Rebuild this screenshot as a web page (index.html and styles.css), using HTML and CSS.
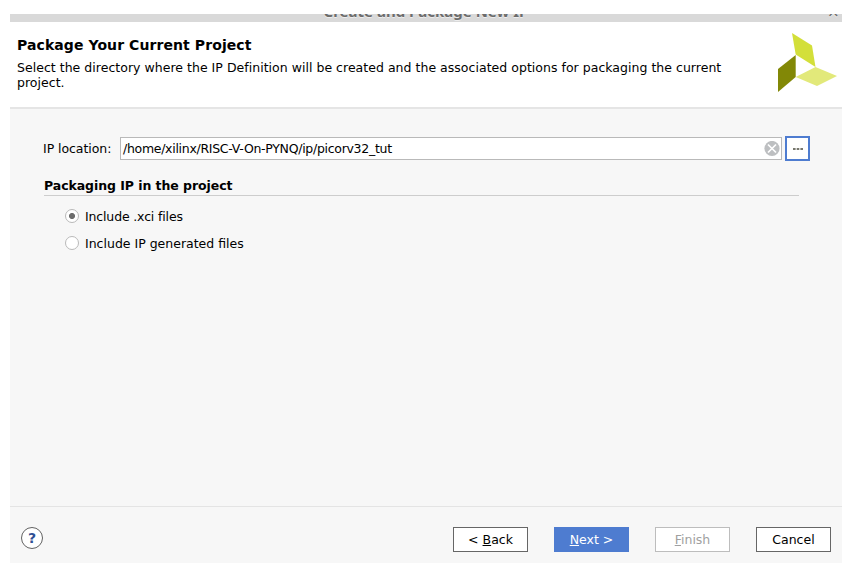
FILE: index.html
```html
<!DOCTYPE html>
<html lang="en">
<head>
<meta charset="utf-8">
<title>Create and Package New IP</title>
<link rel="stylesheet" href="styles.css">
</head>
<body>
<main class="dialog">
  <div class="titlebar"><span class="caption">Create and Package New IP</span><span class="close">×</span></div>
  <header class="header">
    <div class="intro">
      <h1>Package Your Current Project</h1>
      <p>Select the directory where the IP Definition will be created and the associated options for packaging the current<br>project.</p>
    </div>
    <svg class="logo" width="60" height="60" viewBox="0 0 60 60">
      <path fill="#d3df3a" d="M14 0L34 12.500 37.500 34 17.700 21.500Z"/>
      <path fill="#828806" d="M0 36L17.700 22V44L0 59Z"/>
      <path fill="#e2e97a" d="M17.700 44L37.500 34 59 43 39 53Z"/>
    </svg>
  </header>
  <section class="content">
    <div class="location">
      <label for="path">IP location:</label>
      <div class="field">
        <span id="path" class="path">/home/xilinx/RISC-V-On-PYNQ/ip/picorv32_tut</span>
        <svg width="16" height="16" viewBox="0 0 16 16"><circle cx="8" cy="7.500" r="7.600" fill="#bdbfc1"/><path d="M4 3.500L12 11.500M12 3.500L4 11.500" stroke="#fff" stroke-width="1.700"/></svg>
      </div>
      <button class="browse"><svg width="10" height="2" viewBox="0 0 10 2"><path fill="#77776d" d="M0 0h2.600v2H0zM3.700 0h2.600v2H3.700zM7.400 0H10v2H7.400z"/></svg></button>
    </div>
    <h2>Packaging IP in the project</h2>
    <div class="options">
      <div class="option"><span class="radio checked"></span><span class="xci">Include .xci files</span></div>
      <div class="option"><span class="radio"></span><span class="generated">Include IP generated files</span></div>
    </div>
  </section>
  <footer class="footer">
    <span class="help">?</span>
    <div class="actions">
      <button>&lt; <u>B</u>ack</button>
      <button class="primary"><u>N</u>ext &gt;</button>
      <button class="disabled"><u>F</u>inish</button>
      <button>Cancel</button>
    </div>
  </footer>
</main>
</body>
</html>
```
FILE: styles.css
```css
* { box-sizing: border-box; }
body {
  margin: 0;
  padding: 14px 10px 10px;
  background: #fff;
  color: #000;
  font: 12.5px/15px "DejaVu Sans", sans-serif;
}
h1, h2, p { margin: 0; }
.dialog {
  display: flex;
  flex-direction: column;
  height: 549px;
  background: #f7f7f7;
}
.titlebar {
  display: flex;
  align-items: flex-start;
  flex: none;
  height: 8px;
  overflow: hidden;
  background: #d9d9d9;
  color: #6c6c6c;
  text-shadow: 0 1px #eee;
}
.caption {
  flex: 1;
  margin-top: -11px;
  padding-left: 15px;
  text-align: center;
  font: bold 15px/16px "Noto Sans", sans-serif;
}
.close { width: 15px; margin-top: -10px; font-size: 15px; line-height: 16px; }
.header {
  display: flex;
  justify-content: space-between;
  flex: none;
  height: 87px;
  padding: 11px 4px 0 7px;
  border-bottom: 2px solid #e5e5e5;
  background: #fff;
}
.intro { padding-top: 3px; white-space: nowrap; }
h1 { font-size: 14px; line-height: 18px; letter-spacing: .085px; }
.intro p { margin-top: 6px; letter-spacing: .027px; }
.content { flex: 1; padding: 27px 32px 0 33px; }
.location { display: flex; align-items: center; height: 25px; }
.location label { width: 77px; letter-spacing: -.06px; }
.path { letter-spacing: -.29px; }
.xci { letter-spacing: -.15px; }
.field {
  display: flex;
  align-items: center;
  justify-content: space-between;
  width: 662px;
  height: 23px;
  padding: 0 1px 0 2px;
  border: 1px solid #b9b9b9;
  background: #fff;
}
button { font: inherit; color: #000; padding: 0; background: #fff; }
.browse {
  display: flex;
  align-items: center;
  justify-content: center;
  width: 25px;
  height: 25px;
  margin-left: 3px;
  border: 2px solid #4e7cd0;
}
h2 {
  height: 18px;
  margin: 17px 0 0 1px;
  border-bottom: 1px solid #cdcdcd;
  font-size: 12.5px;
  line-height: 15px;
  letter-spacing: -.06px;
}
.content h2 { width: 755px; }
.options { padding: 13px 0 0 22px; }
.option { display: flex; align-items: flex-start; gap: 6px; height: 15px; margin-bottom: 12px; }
.radio {
  flex: none;
  width: 14px;
  height: 14px;
  border: 1px solid #b9b9b9;
  border-radius: 50%;
  background: #fff;
}
.checked { background: radial-gradient(circle, #6c6c6c 0 2.7px, #fff 3.3px); }
.footer {
  display: flex;
  align-items: flex-start;
  justify-content: space-between;
  flex: none;
  height: 57px;
  padding: 20px 11px 0;
  border-top: 1px solid #e4e4e4;
}
.help {
  width: 22px;
  height: 22px;
  border: 1px solid #626262;
  border-radius: 50%;
  background: #fff;
  color: #304f94;
  font: bold 14px/21px "DejaVu Sans", sans-serif;
  text-align: center;
}
.actions { display: flex; gap: 26px; }
.actions button { width: 75px; height: 25px; border: 1px solid #666; }
.actions .primary { border-color: #4e7cd0; background: #4e7cd0; color: #fff; }
.actions .disabled { border-color: #bdbdbd; color: #a0a0a0; }
u { text-underline-offset: 1px; text-decoration-skip-ink: none; }
```
